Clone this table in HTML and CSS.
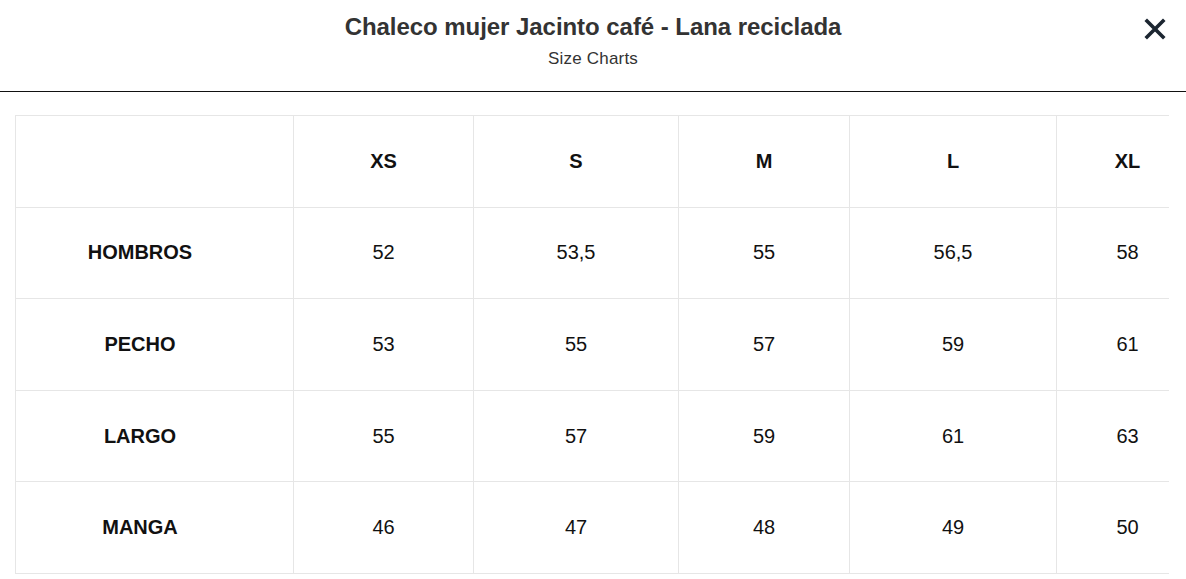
FILE: index.html
```html
<!DOCTYPE html>
<html lang="es">
<head>
<meta charset="utf-8">
<title>Size Charts</title>
<link rel="stylesheet" href="styles.css">
</head>
<body>
<header class="modal-header">
  <div class="titles">
    <h1 class="title">Chaleco mujer Jacinto café - Lana reciclada</h1>
    <p class="subtitle">Size Charts</p>
  </div>
  <button class="close" aria-label="Cerrar">
    <svg width="22" height="22" viewBox="0 0 22 22"><path d="M3 3 L19 19 M19 3 L3 19" stroke="#1c2631" stroke-width="3.6" stroke-linecap="square" fill="none"/></svg>
  </button>
</header>
<div class="table-wrap">
  <table class="chart">
    <colgroup>
      <col class="c-label"><col class="c-xs"><col class="c-s"><col class="c-m"><col class="c-l"><col class="c-xl">
    </colgroup>
    <thead>
      <tr><th class="label"></th><th>XS</th><th>S</th><th>M</th><th>L</th><th>XL</th></tr>
    </thead>
    <tbody>
      <tr><th class="label">HOMBROS</th><td>52</td><td>53,5</td><td>55</td><td>56,5</td><td>58</td></tr>
      <tr><th class="label">PECHO</th><td>53</td><td>55</td><td>57</td><td>59</td><td>61</td></tr>
      <tr><th class="label">LARGO</th><td>55</td><td>57</td><td>59</td><td>61</td><td>63</td></tr>
      <tr><th class="label">MANGA</th><td>46</td><td>47</td><td>48</td><td>49</td><td>50</td></tr>
    </tbody>
  </table>
</div>
</body>
</html>
```
FILE: styles.css
```css
* { box-sizing: border-box; }
body {
  margin: 0;
  background: #fff;
  font-family: "Liberation Sans", Arial, sans-serif;
  color: #111;
}
.modal-header {
  position: relative;
  height: 92px;
  border-bottom: 1px solid #111;
  display: flex;
  justify-content: center;
}
.titles {
  text-align: center;
  padding-top: 12px;
}
.title {
  margin: 0;
  font-size: 24px;
  line-height: 30px;
  font-weight: 700;
  color: #333;
  letter-spacing: -0.05px;
}
.subtitle {
  margin: 7px 0 0;
  font-size: 17px;
  line-height: 20px;
  color: #333;
  letter-spacing: 0.2px;
}
.close {
  position: absolute;
  right: 20px;
  top: 18px;
  width: 22px;
  height: 22px;
  padding: 0;
  border: 0;
  background: none;
  display: flex;
}
.table-wrap {
  margin: 23px 17px 0 15px;
  overflow: hidden;
}
.chart {
  border-collapse: collapse;
  table-layout: fixed;
  width: 1300px;
}
.c-label { width: 278px; }
.c-xs { width: 180px; }
.c-s { width: 205px; }
.c-m { width: 171px; }
.c-l { width: 207px; }
.c-xl { width: 259px; }
.chart th, .chart td {
  border: 1px solid #e6e6e6;
  height: 91.6px;
  padding: 0;
  text-align: center;
  vertical-align: middle;
  font-size: 20px;
  color: #111;
}
.chart th { font-weight: 700; }
.chart td { font-weight: 400; }
.chart .label { padding-right: 29px; }
.chart td:last-child, .chart th:last-child { padding-right: 117px; }
```
